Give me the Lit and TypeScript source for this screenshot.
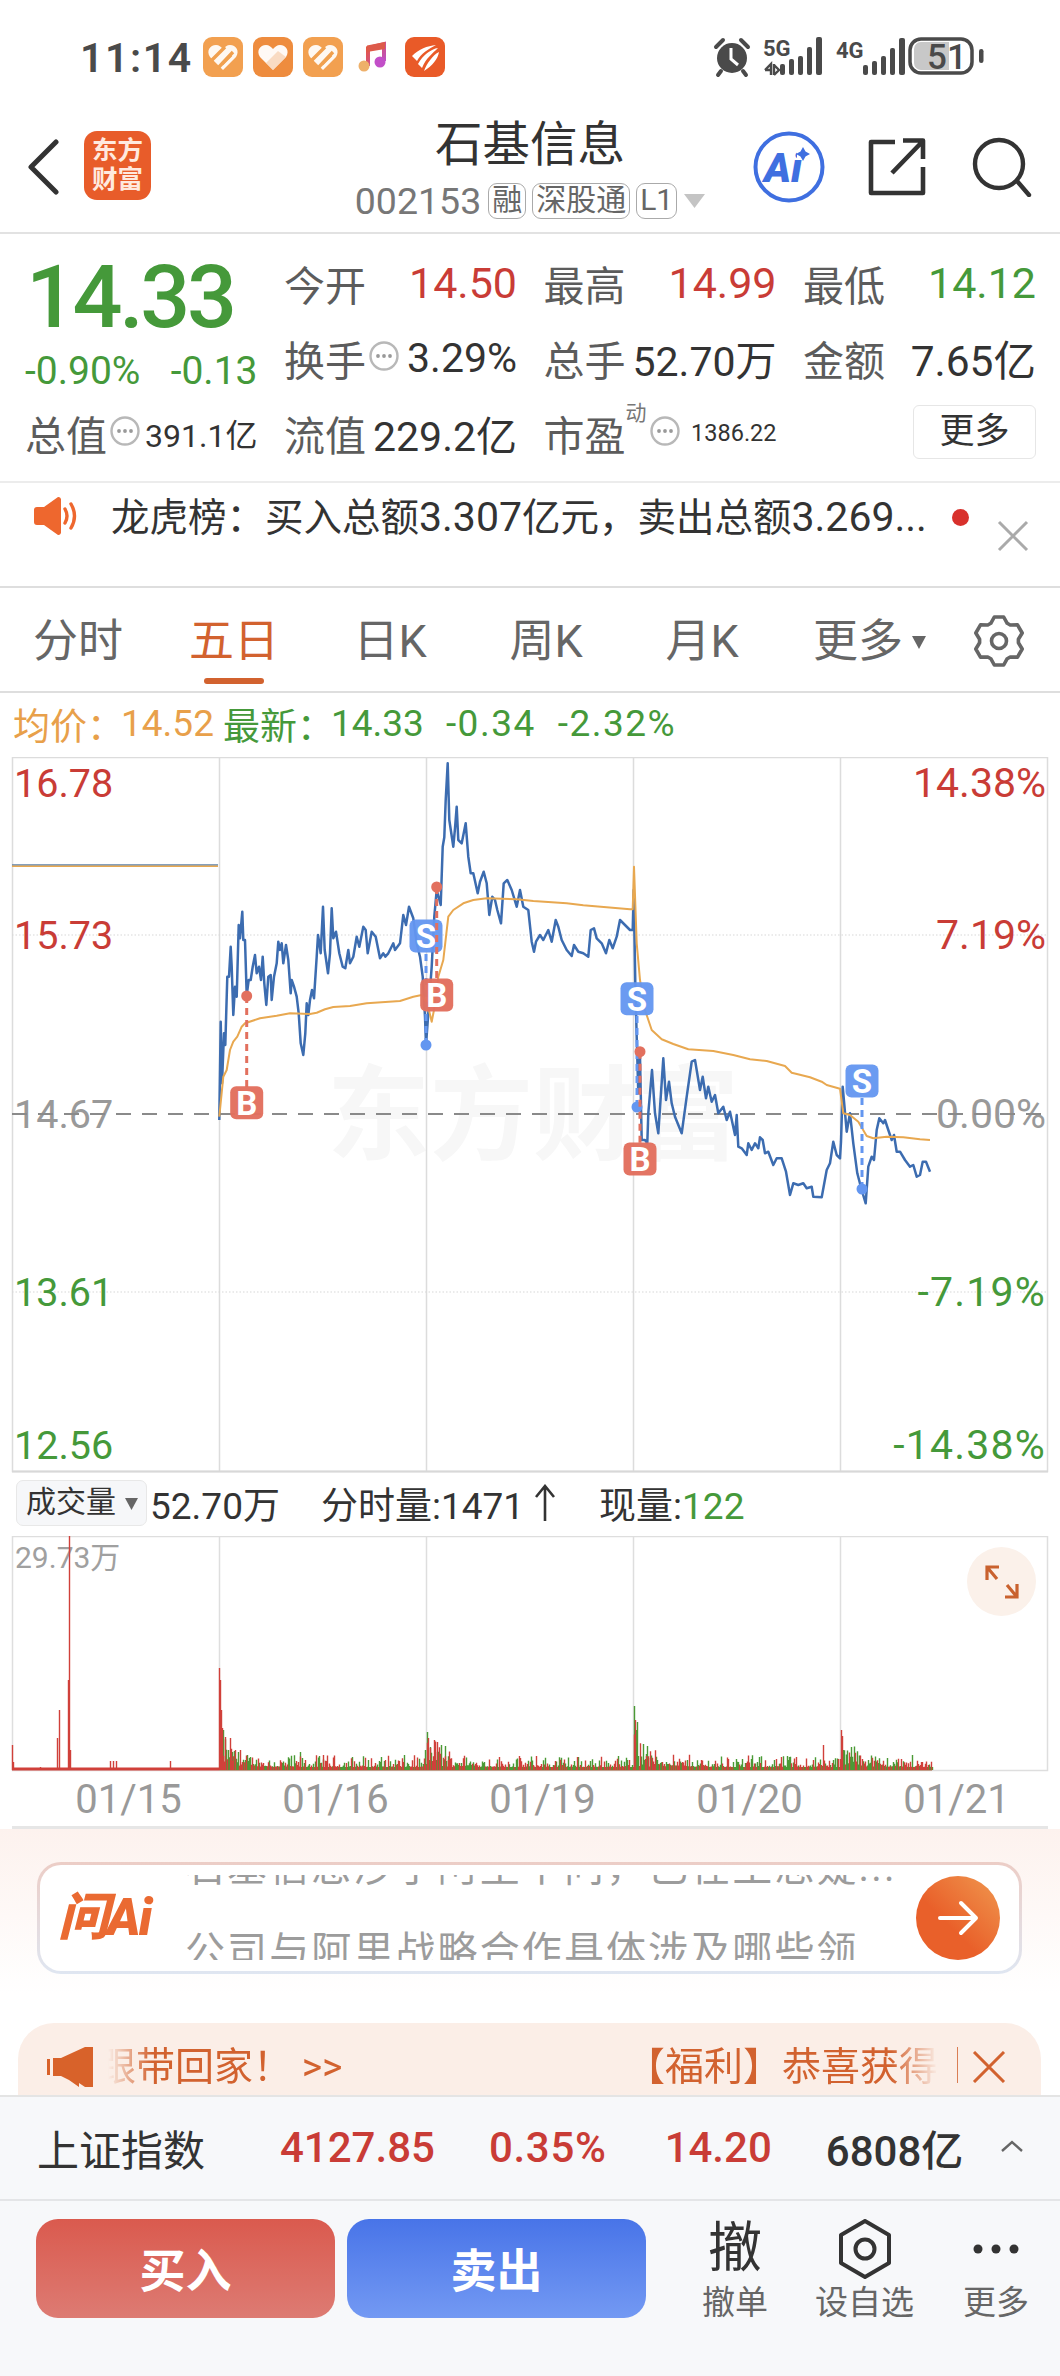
import { LitElement, html, css, svg } from "lit";
import { customElement } from "lit/decorators.js";

type P = number[];
const z4 = (a: P) => { const o: string[] = []; for (let i = 0; i < a.length; i += 2) o.push(`${(200 + a[i] / 3).toFixed(1)},${(750 + a[i + 1] / 3).toFixed(1)}`); return o; };
const z5 = (a: P) => { const o: string[] = []; for (let i = 0; i < a.length; i += 2) o.push(`${(620 + a[i] / 3).toFixed(1)},${(850 + a[i + 1] / 3).toFixed(1)}`); return o; };

const price = [
  ...z4([58,1110,62,815,66,1000,72,850,76,885,82,680,87,680,92,590,95,650,100,795,105,710,110,740,116,525,120,565,127,485,130,570,135,570,140,735,146,690,152,690,158,650,165,615,170,670,177,650,183,690,188,620,193,700,199,765,205,680,212,675,215,750,222,680,230,640,235,575,240,600,245,580,250,640,258,585,265,630,272,730,275,690,282,710,290,740,296,790,302,880,310,915,316,850,320,760,325,795,330,750,336,720,342,745,350,620,354,555,358,580,362,610,369,470,374,600,384,670,390,610,395,475,400,565,408,545,418,610,428,650,436,655,445,600,450,640,460,620,470,560,478,590,490,530,497,540,503,610,515,545,527,560,540,625,550,610,556,620,565,610,580,580,585,600,600,580,610,495,618,525,627,470,640,505,650,580,660,620,668,680,675,800,678,885,685,790,695,650,703,500,710,420,722,465,728,290,733,262,737,150,743,40,748,210,760,290,765,235,770,170,775,270,785,280,797,220,805,320,812,370,820,370,833,430,840,395,851,365,860,400,868,495,877,440,885,450,892,480,903,520,911,400,922,390,935,420,950,470,960,420,970,470,985,480,995,575,1002,605,1008,575,1020,555,1030,570,1045,540,1055,575,1067,510,1075,530,1085,570,1100,600,1115,618,1122,585,1135,605,1150,610,1165,620,1172,540,1182,535,1190,565,1205,580,1218,610,1228,570,1238,595,1250,560,1260,510,1275,525,1290,540]),
  ...z5([38,240,41,120,46,400,50,560,55,730,60,620,65,870,75,870,82,880,85,790,96,660,105,790,115,850,130,625,138,750,147,695,155,760,165,800,185,850,200,740,215,635,225,630,240,720,248,680,258,745,265,710,275,755,285,735,295,790,310,770,320,810,330,785,345,855,350,795,355,890,365,895,380,915,385,880,395,900,405,880,415,895,420,862,428,870,435,910,445,905,460,945,470,925,485,925,498,965,510,1035,520,1000,535,1005,550,1000,560,1015,575,1010,580,1040,605,1042,620,960,630,940,640,875,650,915,660,925,663,875,668,710,680,845,690,790,700,880,712,970,725,1020,737,1060,745,950,755,920,762,930,770,840,778,805,790,820,795,810,805,840,815,870,822,855,830,905,840,905,855,930,870,950,880,945,890,980,900,975,908,935,918,935,930,965]),
].join(" ");

const avg = [
  ...z4([58,1100,70,980,80,960,90,900,100,875,112,860,125,830,135,820,180,805,230,797,270,790,330,792,350,788,375,778,400,771,450,768,500,760,600,753,640,740,665,735,682,760,695,815,702,780,715,680,730,630,738,560,745,500,760,480,790,460,820,450,860,445,950,448,1000,453,1100,460,1150,466,1290,478]),
  ...z5([38,178,42,50,50,280,60,390,75,480,95,540,125,568,160,582,205,598,280,603,340,615,390,628,440,633,495,648,515,668,570,682,605,695,620,705,660,716,670,790,690,795,715,815,740,858,760,865,800,860,850,862,900,868,930,870]),
].join(" ");

const markers = [
  { t: "B", bx: 246.7, by: 1102.7, dx: 246.7, dy: 996 },
  { t: "S", bx: 426, by: 936, dx: 426, dy: 1045 },
  { t: "B", bx: 436.7, by: 995, dx: 436.7, dy: 887 },
  { t: "S", bx: 637, by: 998.7, dx: 637, dy: 1107 },
  { t: "B", bx: 640, by: 1159, dx: 640, dy: 1051.7 },
  { t: "S", bx: 862, by: 1081, dx: 862, dy: 1189 },
];

const spikes: [number, number, number][] = [
  [12,25,0],[13,8,0],[40,3,0],[57,32,0],[59,60,0],[68,90,0],[69,234,0],[70,20,0],[110,9,0],[113,9,0],[116,9,0],[170,9,0],
  [219,102,0],[220,90,0],[221,60,0],[222,42,0],[223,40,1],[225,33,0],[228,20,1],[230,32,0],[232,18,1],[235,20,0],[238,18,1],[240,20,0],[245,10,1],[300,18,1],[323,15,0],
  [425,20,1],[427,38,1],[428,32,0],[430,22,0],[434,30,0],[435,18,1],[437,28,0],[441,25,1],[445,24,1],[448,10,0],
  [634,64,1],[635,50,0],[636,40,1],[637,48,1],[640,22,0],[643,26,1],[646,14,0],[650,12,1],[692,8,1],
  [813,10,0],[788,10,1],[823,25,0],[841,40,0],[843,20,1],[846,10,1],[855,8,1],
];

function volumePaths() {
  let seed = 12345;
  const rnd = () => { seed = (seed * 1103515245 + 12345) & 0x7fffffff; return seed / 0x7fffffff; };
  let red = "", green = "";
  const sessions = [219, 427, 634, 841];
  for (let x = 219; x <= 932; x++) {
    const s = sessions.filter((v) => v <= x).pop() as number;
    const d = x - s;
    const r = rnd();
    const h = 3 + r * r * r * 12 + 36 * Math.exp(-d / 14) * rnd();
    const seg = `M${x}.5 1770V${(1770 - h).toFixed(1)}`;
    if (rnd() > 0.5) red += seg; else green += seg;
  }
  for (const [x, h, c] of spikes) {
    const seg = `M${x}.5 1770V${1770 - h}`;
    if (c) green += seg; else red += seg;
  }
  return { red, green };
}
const vol = volumePaths();

function gearPath() {
  const pts: string[] = [];
  const c = 26;
  for (let i = 0; i < 6; i++) {
    const a = -90 + 60 * i;
    for (const [off, r] of [[-25, 19.5], [-11, 24.5], [11, 24.5], [25, 19.5]]) {
      const t = ((a + off) * Math.PI) / 180;
      pts.push(`${(c + r * Math.cos(t)).toFixed(1)} ${(c + r * Math.sin(t)).toFixed(1)}`);
    }
  }
  return "M" + pts.join("L") + "Z";
}

const dots = () => html`<svg class="dots" viewBox="0 0 30 30"><circle cx="15" cy="15" r="13.5" fill="none" stroke="#b8b8b8" stroke-width="2.4"/><circle cx="9" cy="15" r="1.9" fill="#999"/><circle cx="15" cy="15" r="1.9" fill="#999"/><circle cx="21" cy="15" r="1.9" fill="#999"/></svg>`;

const heartIcon = (cls: string, stripes: boolean) => html`<svg class="appicon" viewBox="0 0 40 40">
  <rect width="40" height="40" rx="9" class=${cls}/>
  <path d="M20 33 L7 20 C3 14 7 8 13 8 C16 8 18 10 20 12 C22 10 24 8 27 8 C33 8 37 14 33 20 Z" fill="#fff" opacity=${stripes ? "0.92" : "0.95"}/>
  ${stripes ? svg`<path d="M8 24 L22 10 M15 31 L30 15" stroke="#f0a04e" stroke-width="3.4"/><path d="M19 27 L28 18" stroke="#f0a04e" stroke-width="3.2"/>` : svg`<path d="M20 33 L13 26 L25 14 L33 20 Z" fill="#f6cfae" opacity=".7"/>`}
</svg>`;

@customElement("app-root")
export class AppRoot extends LitElement {
  static styles = css`
    :host { display: block; width: 1060px; height: 2376px; overflow: hidden; background: #fff; color: #333;
      font-family: Roboto, "Noto Sans CJK SC", sans-serif; }
    * { box-sizing: border-box; }
    svg { display: block; flex: none; }

    .status { height: 112px; display: flex; align-items: flex-start; padding: 37px 0 0 80px; }
    .time { font-size: 41px; font-weight: 600; letter-spacing: 1.6px; line-height: 42px; color: #4a4a4a; width: 123px; }
    .apps { display: flex; gap: 10px; align-items: center; }
    .appicon { width: 40px; height: 40px; }
    .music { width: 30px; height: 32px; margin: 0 7px 0 5px; }
    .grad-a { fill: #f2a050; }
    .grad-b { fill: #ee8c3e; }
    .grad-r { fill: #e95a28; }
    .sysicons { margin-left: auto; margin-right: 67px; width: 280px; height: 44px; }
    .sys-t { font-size: 22px; font-weight: 700; fill: #4a4a4a; }
    .bat-t { font-size: 35px; font-weight: 500; fill: #4a4a4a; }

    .header { height: 122px; border-bottom: 2px solid #e2e2e2; display: grid; grid-template-columns: 27px 66px 1fr; position: relative; padding-left: 27px; }
    .back { width: 32px; height: 56px; margin-top: 27px; }
    .logo { width: 67px; height: 69px; margin: 19px 0 0 30px; background: #e85c2a; border-radius: 13px; color: #ffe9df; font-size: 25.5px; font-weight: 700; line-height: 29px; text-align: center; padding-top: 5px; grid-column: 2; }
    .title { position: absolute; left: 0; right: 0; top: 2px; display: flex; flex-direction: column; align-items: center; pointer-events: none; }
    .title h1 { margin: 0; font-size: 47.5px; font-weight: 400; line-height: 62px; color: #333; }
    .coderow { display: flex; align-items: center; gap: 6px; margin-top: 6px; height: 38px; color: #777; }
    .code { font-size: 37.5px; line-height: 38px; margin-right: 1px; }
    .tag { border: 1.5px solid #aaa; border-radius: 9px; height: 36px; font-size: 30px; line-height: 32px; padding: 0 3px; color: #666; }
    .tri { width: 21px; height: 14px; margin: 0 0 0 1px; }
    .hicons { position: absolute; top: 18px; left: 753px; display: flex; align-items: center; }
    .hicons .ai { width: 72px; height: 74px; margin-right: 43px; }
    .hicons .share { width: 58px; height: 60px; margin-right: 46px; }
    .hicons .search { width: 60px; height: 60px; }
    .ai-t { font-size: 41px; font-weight: 900; font-style: italic; fill: #3f6fe0; }

    .quote { height: 249px; border-bottom: 2px solid #ececec; display: grid; padding: 11px 24px 0 25px;
      grid-template-columns: 232.5px 233px 233px 233px; column-gap: 26.5px; grid-auto-rows: 75px; }
    .quote > * { min-width: 0; }
    .big { grid-row: span 2; }
    .now { font-size: 88px; font-weight: 500; letter-spacing: -3.4px; line-height: 90px; color: #45993a; margin: 7px 0 0 1px; }
    .chg { display: flex; justify-content: space-between; font-size: 39px; line-height: 40px; color: #45993a; margin-top: 9px; }
    .cell { display: flex; align-items: center; justify-content: space-between; font-size: 41px; white-space: nowrap; }
    .lb { color: #5c5c5c; }
    .val { color: #333; }
    .red { color: #c93c36; }
    .grn { color: #45993a; }
    .cell .red, .cell .grn { font-size: 43px; }
    .f42 { font-size: 42.5px; }
    .lft { gap: 3px; justify-content: flex-start; }
    .lft .val { margin-left: auto; }
    .dots { width: 30px; height: 30px; margin-top: -4px; }
    .sm { font-size: 32px; }
    .xs { font-size: 23.5px; }
    .sup { font-size: 21px; color: #777; align-self: flex-start; margin: 7px 0 0 -3px; line-height: 22px; }
    .more { justify-self: end; width: 123px; height: 54px; border: 1.5px solid #e6e6e6; border-radius: 6px; font-size: 35px; line-height: 51px; text-align: center; color: #333; margin-top: 10px; }

    .notice { height: 105px; border-bottom: 2px solid #dedede; display: flex; align-items: flex-start; padding: 13px 0 0 34px; }
    .horn { width: 44px; height: 38px; margin-top: 1px; }
    .notice .txt { font-size: 38.5px; line-height: 42px; color: #333; margin-left: 33px; white-space: nowrap; }
    .num { font-size: 41px; }
    .rdot { width: 17px; height: 17px; border-radius: 50%; background: #d8312c; margin: 13px 0 0 25px; }
    .closex { width: 32px; height: 32px; margin: 24px 0 0 28px; }

    .tabs { height: 105px; border-bottom: 2px solid #dedede; display: flex; align-items: flex-start; }
    .tab { width: 156px; font-size: 45px; line-height: 50px; margin-top: 29px; color: #666; position: relative; height: 65px; display: flex; justify-content: center; }
    .tab.on { color: #d2622f; }
    .tab.on::after { content: ""; position: absolute; left: 48px; width: 60px; height: 6px; bottom: -2px; border-radius: 3px; background: #d2622f; }
    .caret { width: 14px; height: 13px; position: absolute; left: 132px; top: 19px; }
    .gear { width: 52px; height: 52px; margin: 27px 0 0 37px; }

    .legend { height: 64px; display: flex; align-items: center; font-size: 37px; padding: 0 0 3px 13px; color: #45993a; white-space: nowrap; }
    .legend .o { color: #e8a04a; }
    .g1 { margin-left: 9px; }
    .g2 { margin-left: 22px; letter-spacing: 1.5px; }
    .lw { width: 108px; }

    .chart { height: 716px; }
    .chart svg, .volwrap svg { width: 1060px; }
    .ax { font-size: 39.5px; font-family: Roboto, sans-serif; }
    .axr { font-size: 41px; }
    .neg { letter-spacing: 1.2px; }
    .mk { font-size: 33px; font-weight: 700; fill: #fff; text-anchor: middle; }
    .wm { font-size: 103px; font-weight: 700; fill: #f7f7f7; font-family: "Noto Sans CJK SC", sans-serif; }

    .volhead { height: 63px; display: flex; align-items: center; padding: 0 0 3px 16px; font-size: 37px; color: #333; white-space: nowrap; }
    .pill { width: 131px; height: 46px; background: #f6f7f9; border: 1.5px solid #e8e8e8; border-radius: 7px; font-size: 30px; line-height: 42px; padding-left: 9px; position: relative; margin-right: 3px; }
    .pill svg { position: absolute; right: 8px; top: 17px; width: 13px; height: 12px; }
    .fen { margin-left: 41px; }
    .arrowup { width: 22px; height: 38px; margin-left: 10px; }
    .xian { margin-left: 43px; }

    .volwrap { height: 236px; position: relative; }
    .vt { font-size: 30px; fill: #a0a0a0; }
    .expand { position: absolute; left: 967px; top: 11px; width: 69px; height: 69px; border-radius: 50%; background: #fbf1ea; display: flex; align-items: center; justify-content: center; }
    .expand svg { width: 36px; height: 36px; }

    .dates { height: 57px; margin: 0 12px; border-bottom: 3px solid #e6e6e6; display: grid; grid-template-columns: repeat(5, 207px); padding-left: 13px; font-size: 40px; color: #999; line-height: 56px; text-align: center; }

    .aisec { height: 266px; background: linear-gradient(#fdf2ee, #fff 62%, #fff); position: relative; padding-top: 33px; }
    .aicard { margin: 0 38px 0 37px; height: 112px; border-radius: 24px; background: linear-gradient(#fff, #fff) padding-box, linear-gradient(#eccdc6, #dfe6f1) border-box; border: 3px solid transparent; display: flex; align-items: center; position: relative; padding-left: 18px; }
    .ailogo { width: 110px; font-size: 51px; font-weight: 900; font-style: italic; color: #ea6a32; line-height: 50px; white-space: nowrap; letter-spacing: -2px; }
    .scroll { position: absolute; left: 145px; top: 10px; width: 730px; height: 85px; overflow: hidden; color: #9c9c9c; font-size: 40px; line-height: 40px; letter-spacing: 2.1px; white-space: nowrap; }
    .scroll div:first-child { margin-top: -27px; margin-bottom: 44px; }
    .go { position: absolute; left: 876px; top: 11px; width: 84px; height: 84px; border-radius: 50%; background: linear-gradient(225deg, #f0984f, #e9602a 60%); display: flex; align-items: center; justify-content: center; }
    .go svg { width: 42px; height: 42px; }

    .banner { position: absolute; left: 18px; right: 19px; bottom: 0; height: 72px; background: #fbeee7; border-radius: 36px 36px 0 0; display: flex; align-items: flex-start; padding: 24px 0 0 29px; color: #d2622f; font-size: 39px; white-space: nowrap; line-height: 40px; }
    .bhorn { width: 46px; height: 40px; }
    .bl { width: 244px; margin-left: 15px; overflow: hidden; -webkit-mask-image: linear-gradient(90deg, transparent, #000 44px); mask-image: linear-gradient(90deg, transparent, #000 44px); }
    .bl span { display: block; margin-left: -11px; }
    .br { width: 312px; margin-left: 274px; overflow: hidden; -webkit-mask-image: linear-gradient(90deg, #000 85%, transparent); mask-image: linear-gradient(90deg, #000 85%, transparent); }
    .bsep { width: 1px; height: 36px; background: #d2622f; margin-left: 19px; opacity: .8; }
    .bx { width: 34px; height: 32px; margin: 4px 0 0 14px; }

    .bottom { background: #f7f8fa; height: 281px; border-top: 2px solid #e4e4e4; }
    .index { height: 104px; border-bottom: 2px solid #e4e5e7; display: flex; align-items: center; padding: 0 36px 2px 37px; font-size: 42px; white-space: nowrap; }
    .index .nm { width: 243px; color: #333; }
    .index b { font-weight: 500; }
    .i2 { margin-left: 54px; letter-spacing: .7px; }
    .i3 { margin-left: 58px; }
    .i4 { margin-left: 54px; color: #333; }
    .chev { width: 24px; height: 12px; margin-left: auto; margin-top: -2px; }
    .actions { display: flex; padding: 18px 0 0 36px; align-items: flex-start; }
    .btn { width: 299px; height: 99px; border-radius: 22px; color: #fff; font-size: 46px; font-weight: 700; display: flex; align-items: center; justify-content: center; margin-right: 12px; padding-bottom: 4px; }
    .buy { background: linear-gradient(#da5a4e, #dd7b73); }
    .sell { background: linear-gradient(#4874e8, #7399f3); }
    .acts { display: grid; grid-template-columns: 154px 105px 143px; justify-items: center; margin-top: -6px; }
    .actc { display: flex; flex-direction: column; align-items: center; color: #666; font-size: 33px; line-height: 38px; height: 110px; }
    .actc .top { height: 71px; display: flex; align-items: center; justify-content: center; }
    .c3 { justify-self: start; margin-left: 46px; }
    .che { font-size: 54px; color: #333; line-height: 60px; }
    .hex { width: 54px; height: 60px; }
    .more3 { width: 46px; height: 10px; }
  `;

  render() {
    return html`
      <div class="status">
        <div class="time">11:14</div>
        <div class="apps">
          ${heartIcon("grad-a", true)}
          ${heartIcon("grad-b", false)}
          ${heartIcon("grad-a", true)}
          <svg class="music" viewBox="0 0 30 32">
            <defs><linearGradient id="mg" x1="0" y1="0" x2="1" y2="1"><stop offset="0" stop-color="#e8563a"/><stop offset="1" stop-color="#b94fd0"/></linearGradient></defs>
            <path d="M10 25 V7 L26 3 V20" fill="none" stroke="url(#mg)" stroke-width="4"/>
            <path d="M9 4.5 L27 1 V8 L9 11Z" fill="#dd5a4a"/>
            <circle cx="6" cy="25" r="5.5" fill="#eeb06a"/><circle cx="22" cy="21" r="5.5" fill="#c24fc8"/>
          </svg>
          <svg class="appicon" viewBox="0 0 40 40">
            <rect width="40" height="40" rx="9" class="grad-r"/>
            <path d="M7 19 C14 12 22 9 31 8 C24 12 16 16 12 24 Z M13 27 C18 18 26 12 33 11 C28 16 21 21 17 31 Z M19 34 C22 26 28 18 34 15 C33 22 27 29 19 34 Z" fill="#fff"/>
          </svg>
        </div>
        <svg class="sysicons" viewBox="0 0 280 44">
          <g fill="#4a4a4a">
            <circle cx="19" cy="21" r="15"/>
            <path d="M3 10 L10 3 M28 3 L35 10 M8 34 L5 38 M30 34 L33 38" stroke="#4a4a4a" stroke-width="4" stroke-linecap="round"/>
          </g>
          <path d="M18 11 V22 L25 28" stroke="#fff" stroke-width="3" fill="none"/>
          <text class="sys-t" x="50" y="19">5G</text>
          <path d="M52 33 L58 27 V38 M52 33 H57 M61 27 V38 M61 28 L66 33 L61 38" stroke="#4a4a4a" stroke-width="2.4" fill="none"/>
          <g fill="#4a4a4a">
            <rect x="67" y="27" width="5" height="11" rx="2"/><rect x="76" y="22" width="5" height="16" rx="2"/><rect x="85" y="19" width="5" height="19" rx="2"/><rect x="94" y="10" width="5" height="28" rx="2"/><rect x="103" y="0" width="6" height="38" rx="2"/>
          </g>
          <text class="sys-t" x="123" y="21">4G</text>
          <g fill="#4a4a4a">
            <rect x="150" y="28" width="5" height="10" rx="2"/><rect x="159" y="24" width="5" height="14" rx="2"/><rect x="168" y="19" width="5" height="19" rx="2"/><rect x="177" y="11" width="5" height="27" rx="2"/><rect x="186" y="1" width="6" height="37" rx="2"/>
          </g>
          <rect x="197" y="2" width="62" height="34" rx="11" fill="#fff" stroke="#4a4a4a" stroke-width="3.5"/>
          <path d="M201 12 a7 7 0 0 1 7-7 H236 V33 H208 a7 7 0 0 1 -7 -7 Z" fill="#c8c8c8"/>
          <text class="bat-t" x="214" y="32">51</text>
          <rect x="266" y="12" width="4.5" height="14" rx="2.2" fill="#4a4a4a"/>
        </svg>
      </div>

      <div class="header">
        <svg class="back" viewBox="0 0 32 56"><path d="M29 3 L4 28 L29 53" fill="none" stroke="#333" stroke-width="5" stroke-linecap="round" stroke-linejoin="round"/></svg>
        <div class="logo">东方<br />财富</div>
        <div class="title">
          <h1>石基信息</h1>
          <div class="coderow">
            <span class="code">002153</span>
            <span class="tag">融</span><span class="tag">深股通</span><span class="tag">L1</span>
            <svg class="tri" viewBox="0 0 21 14"><path d="M0 0H21L10.5 14Z" fill="#c4c4c4"/></svg>
          </div>
        </div>
        <div class="hicons">
          <svg class="ai" viewBox="0 0 72 74">
            <circle cx="36" cy="37" r="33.5" fill="none" stroke="#3f6fe0" stroke-width="4"/>
            <text class="ai-t" x="11" y="52">Ai</text>
            <rect x="44" y="18" width="12" height="12" fill="#fff"/>
            <path d="M50 17 L52.5 21.5 L57 24 L52.5 26.5 L50 31 L47.5 26.5 L43 24 L47.5 21.5Z" fill="#3f6fe0"/>
          </svg>
          <svg class="share" viewBox="0 0 58 60"><path d="M27 5 H3 V56 H55 V30 M24 36 L54 5 M35 3.5 H55 V22" fill="none" stroke="#333" stroke-width="4.6" stroke-linejoin="round"/></svg>
          <svg class="search" viewBox="0 0 60 60"><circle cx="27" cy="27" r="24" fill="none" stroke="#333" stroke-width="4.4"/><path d="M45 44 L57 58" stroke="#333" stroke-width="4.4" stroke-linecap="round"/></svg>
        </div>
      </div>

      <div class="quote">
        <div class="big">
          <div class="now">14.33</div>
          <div class="chg"><span>-0.90%</span><span>-0.13</span></div>
        </div>
        <div class="cell"><span class="lb">今开</span><span class="red">14.50</span></div>
        <div class="cell"><span class="lb">最高</span><span class="red">14.99</span></div>
        <div class="cell"><span class="lb">最低</span><span class="grn">14.12</span></div>

        <div class="cell lft"><span class="lb">换手</span>${dots()}<span class="val">3.29%</span></div>
        <div class="cell"><span class="lb">总手</span><span class="val">52.70万</span></div>
        <div class="cell"><span class="lb">金额</span><span class="val f42">7.65亿</span></div>

        <div class="cell lft"><span class="lb">总值</span>${dots()}<span class="val sm">391.1亿</span></div>
        <div class="cell"><span class="lb">流值</span><span class="val">229.2亿</span></div>
        <div class="cell lft"><span class="lb">市盈</span><span class="sup">动</span>${dots()}<span class="val xs">1386.22</span></div>
        <div class="more">更多</div>
      </div>

      <div class="notice">
        <svg class="horn" viewBox="0 0 44 38"><path d="M0 13 a3 3 0 0 1 3-3 H10 L24 0 a3 3 0 0 1 3 2 V36 a3 3 0 0 1 -3 2 L10 28 H3 a3 3 0 0 1 -3 -3Z" fill="#ee672e"/><path d="M31 12 Q35 19 31 26 M37 7 Q44 19 37 31" fill="none" stroke="#ee672e" stroke-width="3.4" stroke-linecap="round"/></svg>
        <div class="txt">龙虎榜：买入总额<span class="num">3.307</span>亿元，卖出总额<span class="num">3.269...</span></div>
        <div class="rdot"></div>
        <svg class="closex" viewBox="0 0 32 32"><path d="M2 2 L30 30 M30 2 L2 30" stroke="#aaa" stroke-width="3"/></svg>
      </div>

      <div class="tabs">
        <div class="tab">分时</div>
        <div class="tab on">五日</div>
        <div class="tab">日K</div>
        <div class="tab">周K</div>
        <div class="tab">月K</div>
        <div class="tab">更多<svg class="caret" viewBox="0 0 14 13"><path d="M0 0H14L7 13Z" fill="#666"/></svg></div>
        <svg class="gear" viewBox="0 0 52 52"><path d=${gearPath()} fill="none" stroke="#666" stroke-width="3.6" stroke-linejoin="round"/><circle cx="26" cy="26" r="7.5" fill="none" stroke="#666" stroke-width="3.6"/></svg>
      </div>

      <div class="legend">
        <span class="o lw">均价：</span><span class="o">14.52</span>
        <span class="g1 lw">最新：</span><span>14.33</span>
        <span class="g2">-0.34</span><span class="g2">-2.32%</span>
      </div>

      <div class="chart">
        <svg viewBox="0 757 1060 716" height="716">
          <text class="wm" x="327" y="1152">东方财富</text>
          <g stroke="#dcdcdc" fill="none" stroke-width="1.5">
            <rect x="12.5" y="757.5" width="1035" height="714"/>
            <path d="M219.5 757V1472M426.5 757V1472M633.5 757V1472M840.5 757V1472"/>
          </g>
          <path d="M12 1471.5H1048" stroke="#d8d8d8" stroke-width="2"/>
          <path d="M12 935H1048M12 1292H1048" stroke="#d8d8d8" stroke-width="1.2" stroke-dasharray="1.5 2"/>
          <g class="ax">
            <text x="14" y="797" fill="#c93c36">16.78</text>
            <text x="14" y="949" fill="#c93c36">15.73</text>
            <text x="14" y="1128" fill="#999">14.67</text>
            <text x="14" y="1306" fill="#45993a">13.61</text>
            <text x="14" y="1459" fill="#45993a">12.56</text>
            <g text-anchor="end" class="axr">
              <text x="1046" y="797" fill="#c93c36">14.38%</text>
              <text x="1046" y="949" fill="#c93c36">7.19%</text>
              <text x="1046" y="1128" fill="#999">0.00%</text>
              <text x="1046" y="1306" fill="#45993a" class="neg">-7.19%</text>
              <text x="1046" y="1459" fill="#45993a" class="neg">-14.38%</text>
            </g>
          </g>
          <path d="M12 1114H1048" stroke="#8a8a8a" stroke-width="2" stroke-dasharray="15 11"/>
          <path d="M12 865H218" stroke="#5d7fa5" stroke-width="1.4"/>
          <path d="M12 866.3H218" stroke="#e8a850" stroke-width="1.6"/>
          <polyline points=${price} fill="none" stroke="#3c6cb0" stroke-width="2.5" stroke-linejoin="round"/>
          <polyline points=${avg} fill="none" stroke="#e8a850" stroke-width="2" stroke-linejoin="round"/>
          ${markers.map((m) => {
            const col = m.t === "B" ? "#e2705e" : "#6396f0";
            const opa = m.t === "B" ? 0.97 : 0.95;
            return svg`<path d="M${m.dx} ${m.dy}V${m.by}" stroke=${col} stroke-width="3" stroke-dasharray="7 5" />
              <circle cx=${m.dx} cy=${m.dy} r="5.5" fill=${col}/>
              <rect x=${m.bx - 16.5} y=${m.by - 16.5} width="33" height="33" rx="6" fill=${col} opacity=${opa}/>
              <text class="mk" x=${m.bx} y=${m.by + 12}>${m.t}</text>`;
          })}
        </svg>
      </div>

      <div class="volhead">
        <div class="pill">成交量<svg viewBox="0 0 13 12"><path d="M0 0H13L6.5 12Z" fill="#666"/></svg></div>
        <span>52.70万</span>
        <span class="fen">分时量:1471</span>
        <svg class="arrowup" viewBox="0 0 22 38"><path d="M11 37V2M2 13L11 2L20 13" fill="none" stroke="#333" stroke-width="2.6"/></svg>
        <span class="xian">现量:<span class="grn">122</span></span>
      </div>

      <div class="volwrap">
        <svg viewBox="0 1536 1060 236" height="236">
          <g stroke="#dedede" fill="none" stroke-width="1.5">
            <rect x="12.5" y="1536.5" width="1035" height="234"/>
            <path d="M219.5 1536V1770M426.5 1536V1770M633.5 1536V1770M840.5 1536V1770"/>
          </g>
          <text class="vt" x="15" y="1568">29.73万</text>
          <path d="M12 1769H219" stroke="#d0403a" stroke-width="3"/>
          <path d="M219 1769H932" stroke="#a8603a" stroke-width="3"/>
          <path d=${vol.green} stroke="#4a9a35" stroke-width="1.4" fill="none"/>
          <path d=${vol.red} stroke="#d0403a" stroke-width="1.4" fill="none"/>
        </svg>
        <div class="expand"><svg viewBox="0 0 36 36"><path d="M3 16V3H15M3 3L13 15M33 20V33H21M33 33L23 21" fill="none" stroke="#c9622f" stroke-width="3.2"/></svg></div>
      </div>

      <div class="dates"><span>01/15</span><span>01/16</span><span>01/19</span><span>01/20</span><span>01/21</span></div>

      <div class="aisec">
        <div class="aicard">
          <div class="ailogo">问Ai</div>
          <div class="scroll"><div>石基信息涉了阿里千问，已在主思疑...</div><div>公司与阿里战略合作具体涉及哪些领</div></div>
          <div class="go"><svg viewBox="0 0 42 42"><path d="M3 21H38M24 6L39 21L24 36" fill="none" stroke="#fff" stroke-width="4" stroke-linecap="round" stroke-linejoin="round"/></svg></div>
        </div>
        <div class="banner">
          <svg class="bhorn" viewBox="0 0 46 40"><path d="M0 12H3V28H0Z M6 11H14L38 0H46V40H38L32 36 V40 L22 33 L14 29H6Z" fill="#d8622a"/></svg>
          <div class="bl"><span>跟带回家！ &gt;&gt;</span></div>
          <div class="br">【福利】恭喜获得</div>
          <div class="bsep"></div>
          <svg class="bx" viewBox="0 0 34 32"><path d="M2 1L32 31M32 1L2 31" stroke="#d2622f" stroke-width="3" fill="none"/></svg>
        </div>
      </div>

      <div class="bottom">
        <div class="index">
          <span class="nm">上证指数</span>
          <b class="red">4127.85</b><b class="red i2">0.35%</b><b class="red i3">14.20</b><b class="i4">6808亿</b>
          <svg class="chev" viewBox="0 0 24 12"><path d="M2 11L12 2L22 11" fill="none" stroke="#666" stroke-width="2.4"/></svg>
        </div>
        <div class="actions">
          <div class="btn buy">买入</div>
          <div class="btn sell">卖出</div>
          <div class="acts">
            <div class="actc"><div class="top"><span class="che">撤</span></div>撤单</div>
            <div class="actc"><div class="top"><svg class="hex" viewBox="0 0 54 60"><path d="M27 2 L51 16 V44 L27 58 L3 44 V16Z" fill="none" stroke="#333" stroke-width="4" stroke-linejoin="round"/><circle cx="27" cy="30" r="9.5" fill="none" stroke="#333" stroke-width="4"/></svg></div>设自选</div>
            <div class="actc c3"><div class="top"><svg class="more3" viewBox="0 0 46 10"><circle cx="5" cy="5" r="4.5" fill="#333"/><circle cx="23" cy="5" r="4.5" fill="#333"/><circle cx="41" cy="5" r="4.5" fill="#333"/></svg></div>更多</div>
          </div>
        </div>
      </div>
    `;
  }
}
